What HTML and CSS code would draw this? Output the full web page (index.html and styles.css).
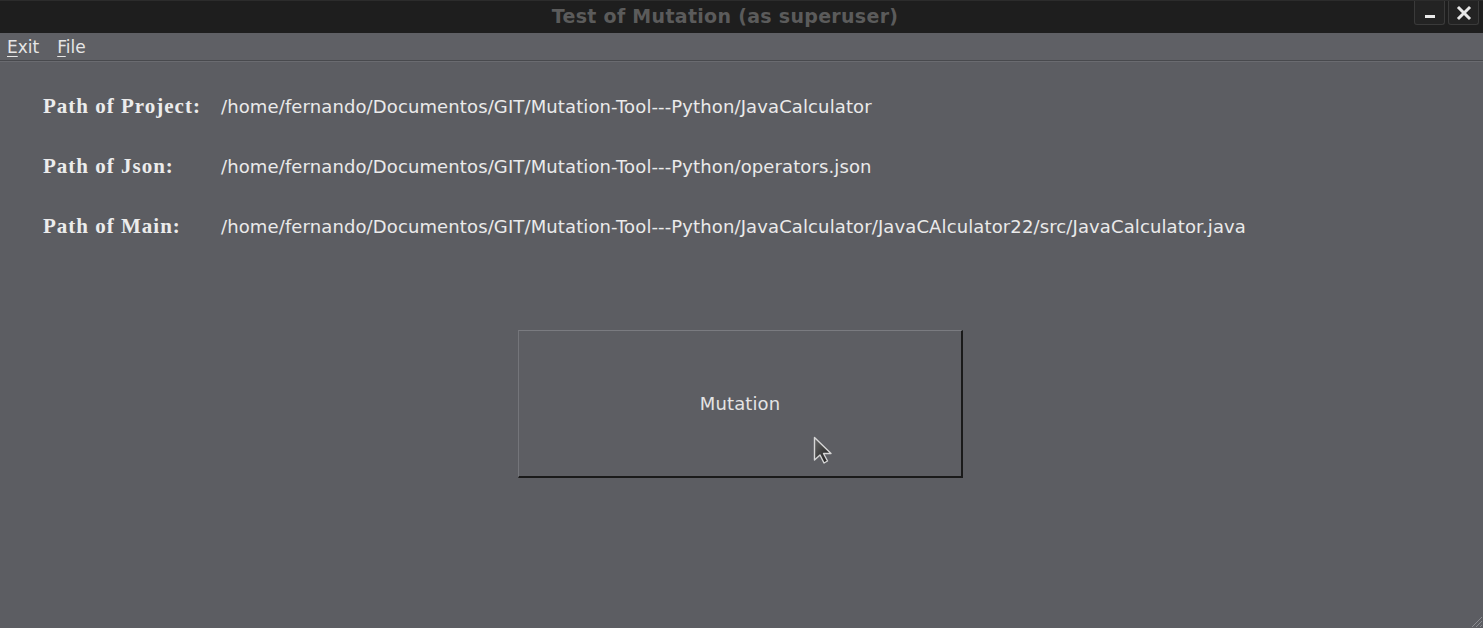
FILE: index.html
```html
<!DOCTYPE html>
<html>
<head>
<meta charset="utf-8">
<link rel="stylesheet" href="styles.css">
</head>
<body>
<div class="window">
  <div class="titlebar">
    <div class="title">Test of Mutation (as superuser)</div>
    <div class="wbtns">
      <div class="wbtn"><span class="minbar"></span></div>
      <div class="wbtn"><svg width="16" height="16" viewBox="0 0 16 16"><path d="M3 3 L13 13 M13 3 L3 13" stroke="#e8e8e8" stroke-width="3" stroke-linecap="square"/></svg></div>
    </div>
  </div>
  <div class="menubar">
    <span class="menu"><u>E</u>xit</span>
    <span class="menu"><u>F</u>ile</span>
  </div>
  <div class="content">
    <div class="row"><span class="label">Path of Project:</span><span class="value">/home/fernando/Documentos/GIT/Mutation-Tool---Python/JavaCalculator</span></div>
    <div class="row"><span class="label">Path of Json:</span><span class="value">/home/fernando/Documentos/GIT/Mutation-Tool---Python/operators.json</span></div>
    <div class="row"><span class="label">Path of Main:</span><span class="value">/home/fernando/Documentos/GIT/Mutation-Tool---Python/JavaCalculator/JavaCAlculator22/src/JavaCalculator.java</span></div>
    <div class="btnwrap">
      <div class="mbutton">Mutation
        <svg class="cursor" width="24" height="36" viewBox="0 0 24 36">
          <defs><linearGradient id="cg" x1="0" y1="0" x2="1" y2="1"><stop offset="0" stop-color="#6a6a6a"/><stop offset="1" stop-color="#141414"/></linearGradient></defs>
          <path d="M1.5 1.5 L1.5 24 L7 19 L11 27 L14.5 25 L10.5 17.5 L18 17.5 Z" fill="url(#cg)" stroke="#d6d6d6" stroke-width="1.4" stroke-linejoin="round"/>
        </svg>
      </div>
    </div>
  </div>
  <svg class="grip" width="14" height="14" viewBox="0 0 14 14"><path d="M13 3 L3 13 M13 7 L7 13 M13 11 L11 13" stroke="#8a8b90" stroke-width="1"/></svg>
</div>
</body>
</html>
```
FILE: styles.css
```css
html, body { margin: 0; padding: 0; }
body { width: 1483px; height: 628px; overflow: hidden; background: #5c5d62; font-family: "DejaVu Sans", sans-serif; }
.window { position: relative; width: 1483px; height: 628px; display: flex; flex-direction: column; }
.titlebar { height: 33px; background: #1e1e1e; border-top: 1px solid #2c2c2c; box-sizing: border-box; position: relative; display: flex; align-items: center; justify-content: center; }
.title { color: #5b5b5b; font-weight: bold; font-size: 19px; letter-spacing: 0.3px; margin-left: -33px; margin-top: -2px; }
.wbtns { position: absolute; right: 4px; top: 0; display: flex; gap: 3px; }
.wbtn { width: 31px; height: 24px; background: #232323; border: 1px solid #3a3a3a; border-top: none; border-radius: 0 0 3px 3px; display: flex; align-items: center; justify-content: center; box-sizing: border-box; }
.minbar { width: 10px; height: 3px; background: #e8e8e8; margin-top: 8px; }
.menubar { height: 27px; background: #5f6065; border-bottom: 1px solid #48494d; display: flex; align-items: center; padding-left: 7px; gap: 18px; box-shadow: 0 1px 0 #6a6b70; }
.menu { color: #e6e6e6; font-size: 17px; }
.menu u { text-decoration-thickness: 1px; text-underline-offset: 3px; }
.content { padding: 33px 0 0 43px; }
.row { display: flex; align-items: baseline; height: 60px; }
.label { width: 178px; font-family: "Liberation Serif", "DejaVu Serif", serif; font-weight: bold; font-size: 21px; letter-spacing: 1px; color: #ececec; }
.value { color: #eaeaea; font-size: 18px; letter-spacing: 0.12px; }
.btnwrap { display: flex; padding: 56px 0 0 475px; }
.mbutton { position: relative; width: 445px; height: 148px; box-sizing: border-box; border-top: 1px solid #7a7b80; border-left: 1px solid #74757a; border-right: 2px solid #1a1a1a; border-bottom: 2px solid #1a1a1a; background: #5d5e63; display: flex; align-items: center; justify-content: center; color: #e4e4e4; font-size: 18px; letter-spacing: 0.1px; }
.cursor { position: absolute; left: 294px; top: 105px; }
.grip { position: absolute; right: 0; bottom: 0; }
```
